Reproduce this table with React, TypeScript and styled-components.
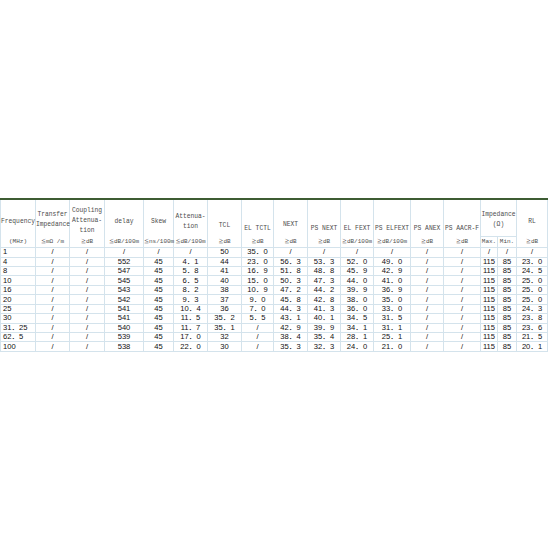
import React from "react";
import styled, { createGlobalStyle } from "styled-components";

const GlobalStyle = createGlobalStyle`
  html, body {
    margin: 0;
    padding: 0;
    background: #fff;
  }
`;

const Page = styled.div`
  height: 550px;
  display: flex;
  align-items: center;
`;

const Sheet = styled.table`
  border-collapse: collapse;
  table-layout: fixed;
  width: 547px;
  border-top: 2px solid #3d5c33;
  border-right: 1px solid #5a5a5a;
  border-left: 1px solid #b8b8b8;
`;

const NameRow = styled.tr`
  height: 37px;
`;

const UnitRow = styled.tr`
  height: 11px;
`;

const DataRow = styled.tr`
  height: 9.45px;
`;

const HeadCell = styled.th<{ $shift?: number; $closed?: boolean }>`
  font: normal 6.3px/10px "Liberation Mono", monospace;
  color: #4d4d4d;
  text-align: center;
  vertical-align: middle;
  padding: ${(p) => p.$shift ?? 0}px 0 0;
  border-left: 1px solid #d4e3ec;
  border-right: 1px solid #d4e3ec;
  border-bottom: ${(p) => (p.$closed ? "1px solid #d4e3ec" : "none")};
  white-space: nowrap;
`;

const UnitCell = styled.th`
  font: normal 6px/10px "Liberation Mono", monospace;
  color: #4d4d4d;
  text-align: center;
  vertical-align: middle;
  padding: 0;
  border-left: 1px solid #d4e3ec;
  border-right: 1px solid #d4e3ec;
  border-bottom: 1px solid #d4e3ec;
  white-space: nowrap;
`;

// the ≦ / ≧ sign only exists in the CJK face, which is full width
const Sign = styled.span`
  font: normal 5px/10px "Noto Sans CJK SC", sans-serif;
`;

const Cell = styled.td<{ $left?: boolean }>`
  font: normal 7.6px/8px "Liberation Sans", "Noto Sans CJK SC", sans-serif;
  color: #111;
  text-align: ${(p) => (p.$left ? "left" : "center")};
  vertical-align: middle;
  padding: 0 0 0 ${(p) => (p.$left ? 2 : 0)}px;
  border: 1px solid #d4e3ec;
  white-space: nowrap;
`;

const widths = [35, 34, 35, 39, 30, 34, 34, 32, 34, 33, 33, 37, 33, 37, 17, 19, 31];

type Head = { name: React.ReactNode; sign?: string; unit: string; shift: number };

const before: Head[] = [
  { name: "Frequency", unit: "(MHz)", shift: 7 },
  { name: <>Transfer<br />Impedance</>, sign: "≦", unit: "mΩ /m", shift: 3 },
  { name: <>Coupling<br />Attenua-<br />tion</>, sign: "≧", unit: "dB", shift: 5 },
  { name: "delay", sign: "≦", unit: "dB/100m", shift: 7 },
  { name: "Skew", sign: "≦", unit: "ns/100m", shift: 7 },
  { name: <>Attenua-<br />tion</>, sign: "≦", unit: "dB/100m", shift: 7 },
  { name: "TCL", sign: "≧", unit: "dB", shift: 15 },
  { name: "EL TCTL", sign: "≧", unit: "dB", shift: 21 },
  { name: "NEXT", sign: "≧", unit: "dB", shift: 13 },
  { name: "PS NEXT", sign: "≧", unit: "dB", shift: 21 },
  { name: "EL FEXT", sign: "≧", unit: "dB/100m", shift: 21 },
  { name: "PS ELFEXT", sign: "≧", unit: "dB/100m", shift: 21 },
  { name: "PS ANEX", sign: "≧", unit: "dB", shift: 21 },
  { name: "PS AACR-F", sign: "≧", unit: "dB", shift: 21 },
];

const rows = [
  ["1", "/", "/", "/", "/", "/", "50", "35.0", "/", "/", "/", "/", "/", "/", "/", "/", "/"],
  ["4", "/", "/", "552", "45", "4.1", "44", "23.0", "56.3", "53.3", "52.0", "49.0", "/", "/", "115", "85", "23.0"],
  ["8", "/", "/", "547", "45", "5.8", "41", "16.9", "51.8", "48.8", "45.9", "42.9", "/", "/", "115", "85", "24.5"],
  ["10", "/", "/", "545", "45", "6.5", "40", "15.0", "50.3", "47.3", "44.0", "41.0", "/", "/", "115", "85", "25.0"],
  ["16", "/", "/", "543", "45", "8.2", "38", "10.9", "47.2", "44.2", "39.9", "36.9", "/", "/", "115", "85", "25.0"],
  ["20", "/", "/", "542", "45", "9.3", "37", "9.0", "45.8", "42.8", "38.0", "35.0", "/", "/", "115", "85", "25.0"],
  ["25", "/", "/", "541", "45", "10.4", "36", "7.0", "44.3", "41.3", "36.0", "33.0", "/", "/", "115", "85", "24.3"],
  ["30", "/", "/", "541", "45", "11.5", "35.2", "5.5", "43.1", "40.1", "34.5", "31.5", "/", "/", "115", "85", "23.8"],
  ["31.25", "/", "/", "540", "45", "11.7", "35.1", "/", "42.9", "39.9", "34.1", "31.1", "/", "/", "115", "85", "23.6"],
  ["62.5", "/", "/", "539", "45", "17.0", "32", "/", "38.4", "35.4", "28.1", "25.1", "/", "/", "115", "85", "21.5"],
  ["100", "/", "/", "538", "45", "22.0", "30", "/", "35.3", "32.3", "24.0", "21.0", "/", "/", "115", "85", "20.1"],
];

// the sheet prints its decimal point as a wide full-width dot
const wide = (v: string) => v.replace(".", "．");

export default function App() {
  return (
    <>
      <GlobalStyle />
      <Page>
        <Sheet>
          <colgroup>
            {widths.map((w, i) => (
              <col key={i} style={{ width: w }} />
            ))}
          </colgroup>
          <thead>
            <NameRow>
              {before.map((h, i) => (
                <HeadCell key={i} $shift={h.shift}>
                  {h.name}
                </HeadCell>
              ))}
              <HeadCell colSpan={2} $shift={5} $closed>
                Impedance
                <br />
                (Ω)
              </HeadCell>
              <HeadCell $shift={7}>RL</HeadCell>
            </NameRow>
            <UnitRow>
              {before.map((h, i) => (
                <UnitCell key={i}>
                  {h.sign && <Sign>{h.sign}</Sign>}
                  {h.unit}
                </UnitCell>
              ))}
              <UnitCell>Max.</UnitCell>
              <UnitCell>Min.</UnitCell>
              <UnitCell>
                <Sign>≧</Sign>dB
              </UnitCell>
            </UnitRow>
          </thead>
          <tbody>
            {rows.map((r, i) => (
              <DataRow key={i}>
                {r.map((v, j) => (
                  <Cell key={j} $left={j === 0}>
                    {wide(v)}
                  </Cell>
                ))}
              </DataRow>
            ))}
          </tbody>
        </Sheet>
      </Page>
    </>
  );
}
